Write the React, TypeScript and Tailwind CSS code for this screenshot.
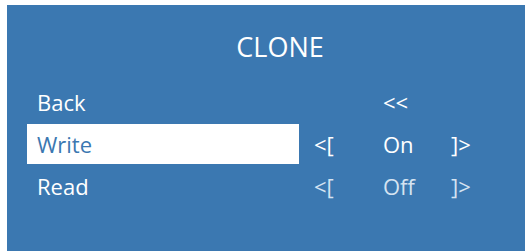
const rows = [
  { label: 'Back', left: '', value: '<<', right: '', active: false, dim: false },
  { label: 'Write', left: '<[', value: 'On', right: ']>', active: true, dim: false },
  { label: 'Read', left: '<[', value: 'Off', right: ']>', active: false, dim: true },
]

export default function App() {
  return (
    <div className="w-[528px] h-[251px] bg-white overflow-hidden" style={{ fontFamily: '"Open Sans", sans-serif' }}>
      <div className="ml-[7px] mt-[5px] w-[518px] h-[246px] bg-[#3b78b1] flex flex-col">
        <div className="mt-[22px] h-[40px] flex items-center justify-center pl-[28px] text-[27px] text-white">
          CLONE
        </div>
        <div className="mt-[15px] flex flex-col gap-[2px] pl-[20px]">
          {rows.map(row => (
            <MenuRow key={row.label} {...row} />
          ))}
        </div>
      </div>
    </div>
  )
}

function MenuRow({ label, left, value, right, active, dim }) {
  const side = dim ? 'text-[#d5e3f1]' : 'text-white'
  return (
    <div className="h-[40px] flex items-center text-[22px]">
      <div
        className={`w-[272px] h-full flex items-center pl-[10px] ${
          active ? 'bg-white text-[#3b78b1]' : 'text-white'
        }`}
      >
        {label}
      </div>
      <span className={`ml-[15px] w-[69px] ${side}`}>{left}</span>
      <span className={`w-[68px] ${side}`}>{value}</span>
      <span className={side}>{right}</span>
    </div>
  )
}
